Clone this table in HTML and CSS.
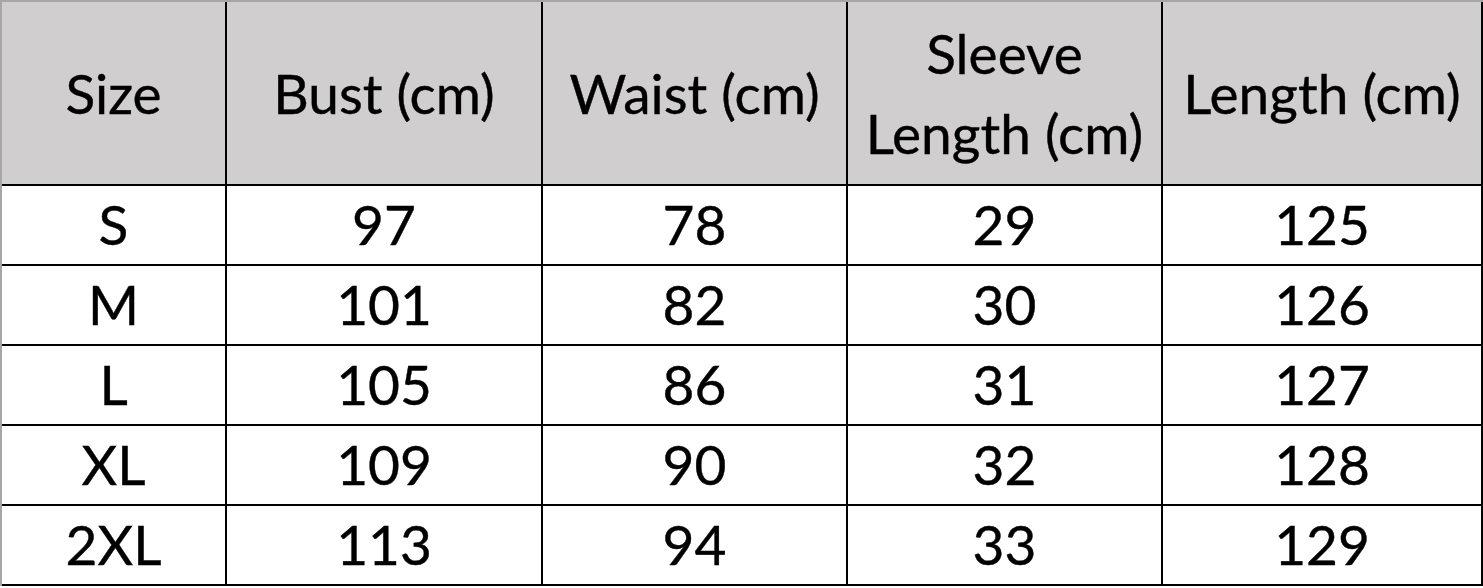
FILE: index.html
```html
<!DOCTYPE html>
<html>
<head>
<meta charset="utf-8">
<link rel="stylesheet" href="styles.css">
</head>
<body>
<table class="size-table">
  <colgroup>
    <col class="c1"><col class="c2"><col class="c3"><col class="c4"><col class="c5">
  </colgroup>
  <thead>
    <tr class="head">
      <th>Size</th>
      <th>Bust (cm)</th>
      <th>Waist (cm)</th>
      <th>Sleeve<br>Length (cm)</th>
      <th>Length (cm)</th>
    </tr>
  </thead>
  <tbody>
    <tr><td>S</td><td>97</td><td>78</td><td>29</td><td>125</td></tr>
    <tr><td>M</td><td>101</td><td>82</td><td>30</td><td>126</td></tr>
    <tr><td>L</td><td>105</td><td>86</td><td>31</td><td>127</td></tr>
    <tr><td>XL</td><td>109</td><td>90</td><td>32</td><td>128</td></tr>
    <tr><td>2XL</td><td>113</td><td>94</td><td>33</td><td>129</td></tr>
  </tbody>
</table>
</body>
</html>
```
FILE: styles.css
```css
html, body {
  margin: 0;
  padding: 0;
  background: #ffffff;
}
.size-table {
  border-collapse: separate;
  border-spacing: 0;
  table-layout: fixed;
  width: 1483px;
  border-left: 2px solid #a6a6a6;
  border-top: 2px solid #a6a6a6;
  font-family: "Lato", "Liberation Sans", sans-serif;
  color: #000;
}
.c1 { width: 225px; }
.c2 { width: 316px; }
.c3 { width: 305px; }
.c4 { width: 315px; }
.c5 { width: 320px; }
.size-table th,
.size-table td {
  box-sizing: border-box;
  border-right: 2px solid #000;
  border-bottom: 2px solid #000;
  padding: 0;
  text-align: center;
  vertical-align: middle;
  font-weight: normal;
  font-size: 55px;
  -webkit-text-stroke: 0.4px #000;
}
.head th {
  height: 184px;
  background: #d0cece;
  line-height: 80px;
}
.size-table td {
  height: 80px;
  line-height: 1;
  padding-bottom: 2px;
}
```
